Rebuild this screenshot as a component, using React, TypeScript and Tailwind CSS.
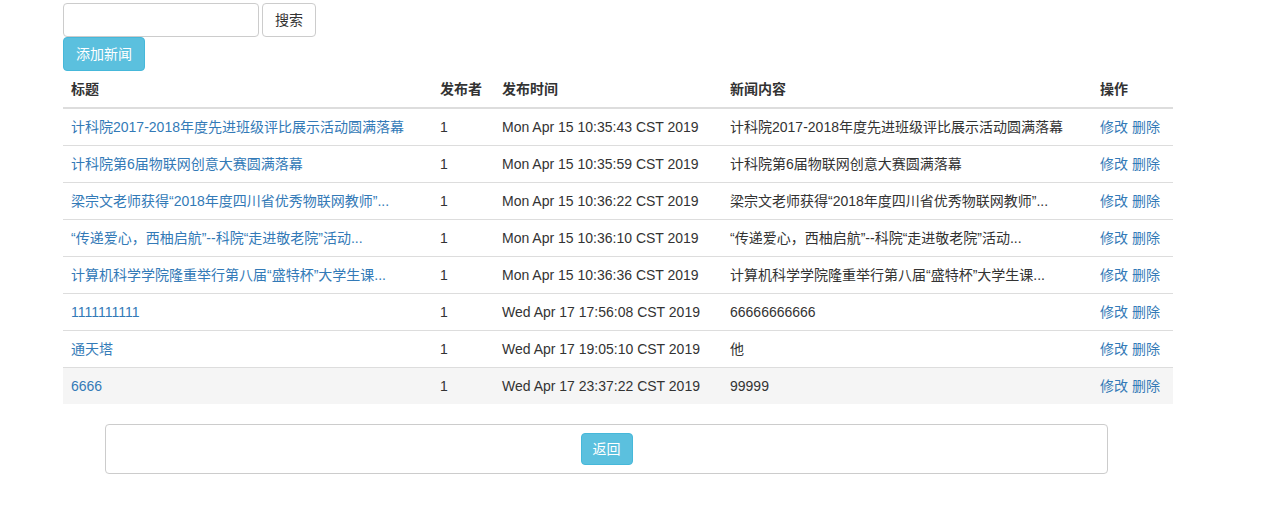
import React from "react";

interface NewsItem {
  title: string;
  author: string;
  time: string;
  content: string;
}

const news: NewsItem[] = [
  { title: "计科院2017-2018年度先进班级评比展示活动圆满落幕", author: "1", time: "Mon Apr 15 10:35:43 CST 2019", content: "计科院2017-2018年度先进班级评比展示活动圆满落幕" },
  { title: "计科院第6届物联网创意大赛圆满落幕", author: "1", time: "Mon Apr 15 10:35:59 CST 2019", content: "计科院第6届物联网创意大赛圆满落幕" },
  { title: "梁宗文老师获得“2018年度四川省优秀物联网教师”...", author: "1", time: "Mon Apr 15 10:36:22 CST 2019", content: "梁宗文老师获得“2018年度四川省优秀物联网教师”..." },
  { title: "“传递爱心，西柚启航”--科院“走进敬老院”活动...", author: "1", time: "Mon Apr 15 10:36:10 CST 2019", content: "“传递爱心，西柚启航”--科院“走进敬老院”活动..." },
  { title: "计算机科学学院隆重举行第八届“盛特杯”大学生课...", author: "1", time: "Mon Apr 15 10:36:36 CST 2019", content: "计算机科学学院隆重举行第八届“盛特杯”大学生课..." },
  { title: "1111111111", author: "1", time: "Wed Apr 17 17:56:08 CST 2019", content: "66666666666" },
  { title: "通天塔", author: "1", time: "Wed Apr 17 19:05:10 CST 2019", content: "他" },
  { title: "6666", author: "1", time: "Wed Apr 17 23:37:22 CST 2019", content: "99999" },
];

export default function App() {
  return (
    <div
      className="min-h-[508px] bg-white text-[14px] leading-[20px] text-[#333]"
      style={{ fontFamily: '"Liberation Sans", "Noto Sans CJK SC", sans-serif' }}
    >
      <div className="ml-[63px] w-[1110px] pt-[3px]">
        {/* Search */}
        <div className="flex gap-[3px]">
          <input
            type="text"
            className="h-[34px] w-[196px] rounded-[4px] border border-[#ccc] px-3 outline-none"
          />
          <button className="h-[34px] w-[54px] rounded-[4px] border border-[#ccc] bg-white text-[#333]">
            搜索
          </button>
        </div>

        <button className="h-[34px] w-[82px] rounded-[4px] border border-[#46b8da] bg-[#5bc0de] text-white">
          添加新闻
        </button>

        {/* Table */}
        <table className="w-[1110px] table-fixed border-collapse">
          <colgroup>
            <col className="w-[369px]" />
            <col className="w-[62px]" />
            <col className="w-[228px]" />
            <col className="w-[370px]" />
            <col className="w-[81px]" />
          </colgroup>
          <thead>
            <tr className="border-b-2 border-[#ddd] text-left font-bold">
              <th className="p-2">标题</th>
              <th className="p-2">发布者</th>
              <th className="p-2">发布时间</th>
              <th className="p-2">新闻内容</th>
              <th className="p-2">操作</th>
            </tr>
          </thead>
          <tbody>
            {news.map((item, index) => (
              <tr
                key={index}
                className={`border-t border-[#ddd] first:border-t-0 ${index === news.length - 1 ? "bg-[#f5f5f5]" : ""}`}
              >
                <td className="truncate p-2">
                  <a className="text-[#337ab7]">{item.title}</a>
                </td>
                <td className="p-2">{item.author}</td>
                <td className="p-2 whitespace-nowrap">{item.time}</td>
                <td className="truncate p-2">{item.content}</td>
                <td className="p-2 whitespace-nowrap text-[#337ab7]">
                  <a>修改</a> <a>删除</a>
                </td>
              </tr>
            ))}
          </tbody>
        </table>
      </div>

      {/* Footer panel */}
      <div className="ml-[105px] mt-[20px] flex h-[50px] w-[1003px] items-center justify-center rounded-[4px] border border-[#ccc]">
        <button className="h-[32px] w-[52px] rounded-[4px] border border-[#46b8da] bg-[#5bc0de] text-white">
          返回
        </button>
      </div>
    </div>
  );
}
